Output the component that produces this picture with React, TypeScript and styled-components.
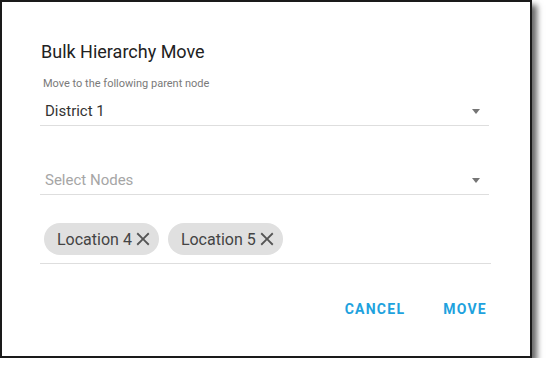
import React from "react";
import styled, { createGlobalStyle } from "styled-components";

const GlobalStyle = createGlobalStyle`
  body {
    margin: 0;
    background: #ffffff;
    font-family: Roboto, "Liberation Sans", sans-serif;
  }
`;

const Dialog = styled.div`
  box-sizing: border-box;
  width: 532px;
  height: 358px;
  background: #ffffff;
  border: 2px solid #1a1a1a;
  box-shadow: 5px 5px 6px rgba(0, 0, 0, 0.6);
  padding: 38px 41px 0 38px;
  display: flex;
  flex-direction: column;
`;

const Title = styled.h2`
  margin: 0;
  font-size: 18px;
  line-height: 24px;
  font-weight: 400;
  color: #222222;
  padding-left: 1px;
`;

const Label = styled.div`
  margin-top: 13px;
  font-size: 11px;
  line-height: 14px;
  color: #7a7a7a;
  padding-left: 3px;
`;

const SelectRow = styled.div<{ $gap: number }>`
  margin-top: ${(p) => p.$gap}px;
  height: 28px;
  display: flex;
  align-items: center;
  justify-content: space-between;
  border-bottom: 1px solid #dedede;
  padding: 0 9px 0 5px;
`;

const SelectText = styled.span<{ $placeholder?: boolean }>`
  font-size: 15px;
  color: ${(p) => (p.$placeholder ? "#a6a6a6" : "#333333")};
`;

const Arrow = styled.span`
  width: 0;
  height: 0;
  border-left: 4.5px solid transparent;
  border-right: 4.5px solid transparent;
  border-top: 5px solid #757575;
`;

const ChipField = styled.div`
  margin-top: 28px;
  display: flex;
  gap: 9px;
  padding: 0 0 8px 4px;
  border-bottom: 1px solid #dedede;
  margin-right: -2px;
`;

const Chip = styled.div`
  height: 32px;
  border-radius: 16px;
  background: #e0e0e0;
  display: flex;
  align-items: center;
  padding: 0 5px 0 13px;
  font-size: 16px;
  color: #444444;
`;

const Actions = styled.div`
  margin-top: 27px;
  display: flex;
  justify-content: flex-end;
  gap: 34px;
`;

const Button = styled.button`
  height: 36px;
  border: none;
  background: transparent;
  padding: 0 2px;
  font-family: Roboto, "Liberation Sans", sans-serif;
  font-size: 14px;
  font-weight: 700;
  letter-spacing: 1.25px;
  color: #1ea2de;
  cursor: pointer;
`;

const CloseIcon = () => (
  <svg width="22" height="22" viewBox="0 0 24 24">
    <path
      d="M19 6.41L17.59 5 12 10.59 6.41 5 5 6.41 10.59 12 5 17.59 6.41 19 12 13.41 17.59 19 19 17.59 13.41 12z"
      fill="#555555"
    />
  </svg>
);

const App = () => {
  const chips = ["Location 4", "Location 5"];
  return (
    <>
      <GlobalStyle />
      <Dialog>
        <Title>Bulk Hierarchy Move</Title>
        <Label>Move to the following parent node</Label>
        <SelectRow $gap={6}>
          <SelectText>District 1</SelectText>
          <Arrow />
        </SelectRow>
        <SelectRow $gap={40}>
          <SelectText $placeholder>Select Nodes</SelectText>
          <Arrow />
        </SelectRow>
        <ChipField>
          {chips.map((c) => (
            <Chip key={c}>
              {c}
              <CloseIcon />
            </Chip>
          ))}
        </ChipField>
        <Actions>
          <Button>CANCEL</Button>
          <Button>MOVE</Button>
        </Actions>
      </Dialog>
    </>
  );
};

export default App;
